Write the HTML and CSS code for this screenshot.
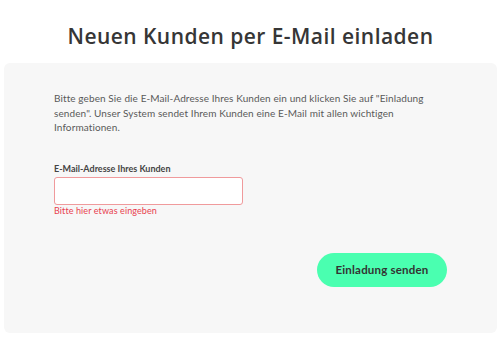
FILE: index.html
```html
<!DOCTYPE html>
<html lang="de">
<head>
<meta charset="utf-8">
<link rel="stylesheet" href="styles.css">
</head>
<body>
<div class="page">
  <h1 class="title">Neuen Kunden per E-Mail einladen</h1>
  <div class="card">
    <p class="intro">Bitte geben Sie die E-Mail-Adresse Ihres Kunden ein und klicken Sie auf "Einladung senden". Unser System sendet Ihrem Kunden eine E-Mail mit allen wichtigen Informationen.</p>
    <div class="field">
      <label class="label" for="email">E-Mail-Adresse Ihres Kunden</label>
      <input class="input" id="email" type="email">
      <div class="error">Bitte hier etwas eingeben</div>
    </div>
    <div class="actions">
      <button class="btn" type="button">Einladung senden</button>
    </div>
  </div>
</div>
</body>
</html>
```

FILE: styles.css
```css
html, body {
  margin: 0;
  padding: 0;
  background: #ffffff;
}
body {
  font-family: Lato, "Noto Sans", "Liberation Sans", sans-serif;
  color: #333;
}
.page {
  padding: 0 3px 0 4px;
}
.title {
  margin: 0 0 12px;
  padding-top: 21px;
  font-family: "Open Sans", Lato, "Liberation Sans", sans-serif;
  font-size: 21px;
  line-height: 30px;
  font-weight: 600;
  text-align: center;
  color: #363636;
  letter-spacing: 0.45px;
}
.card {
  background: #f7f7f7;
  border-radius: 6px;
  padding: 28px 50px 46px 50px;
}
.intro {
  margin: 0;
  font-size: 10px;
  line-height: 14.5px;
  letter-spacing: 0.1px;
  color: #595959;
}
.field {
  margin-top: 28px;
  display: flex;
  flex-direction: column;
  align-items: flex-start;
}
.label {
  font-size: 9px;
  line-height: 12px;
  font-weight: 700;
  color: #444;
  margin-bottom: 2px;
}
.input {
  box-sizing: border-box;
  width: 189px;
  height: 28px;
  margin: 0;
  background: #fff;
  border: 1px solid #f09a9c;
  border-radius: 3px;
  outline: none;
}
.error {
  font-size: 9px;
  line-height: 11px;
  letter-spacing: 0.1px;
  color: #e8414f;
}
.actions {
  display: flex;
  justify-content: flex-end;
  margin-top: 37px;
}
.btn {
  width: 130px;
  height: 34px;
  border: none;
  border-radius: 17px;
  background: #4affb0;
  color: #333;
  font-family: Lato, "Noto Sans", "Liberation Sans", sans-serif;
  font-size: 11.5px;
  font-weight: 700;
  letter-spacing: 0.2px;
  padding: 0;
}
```
